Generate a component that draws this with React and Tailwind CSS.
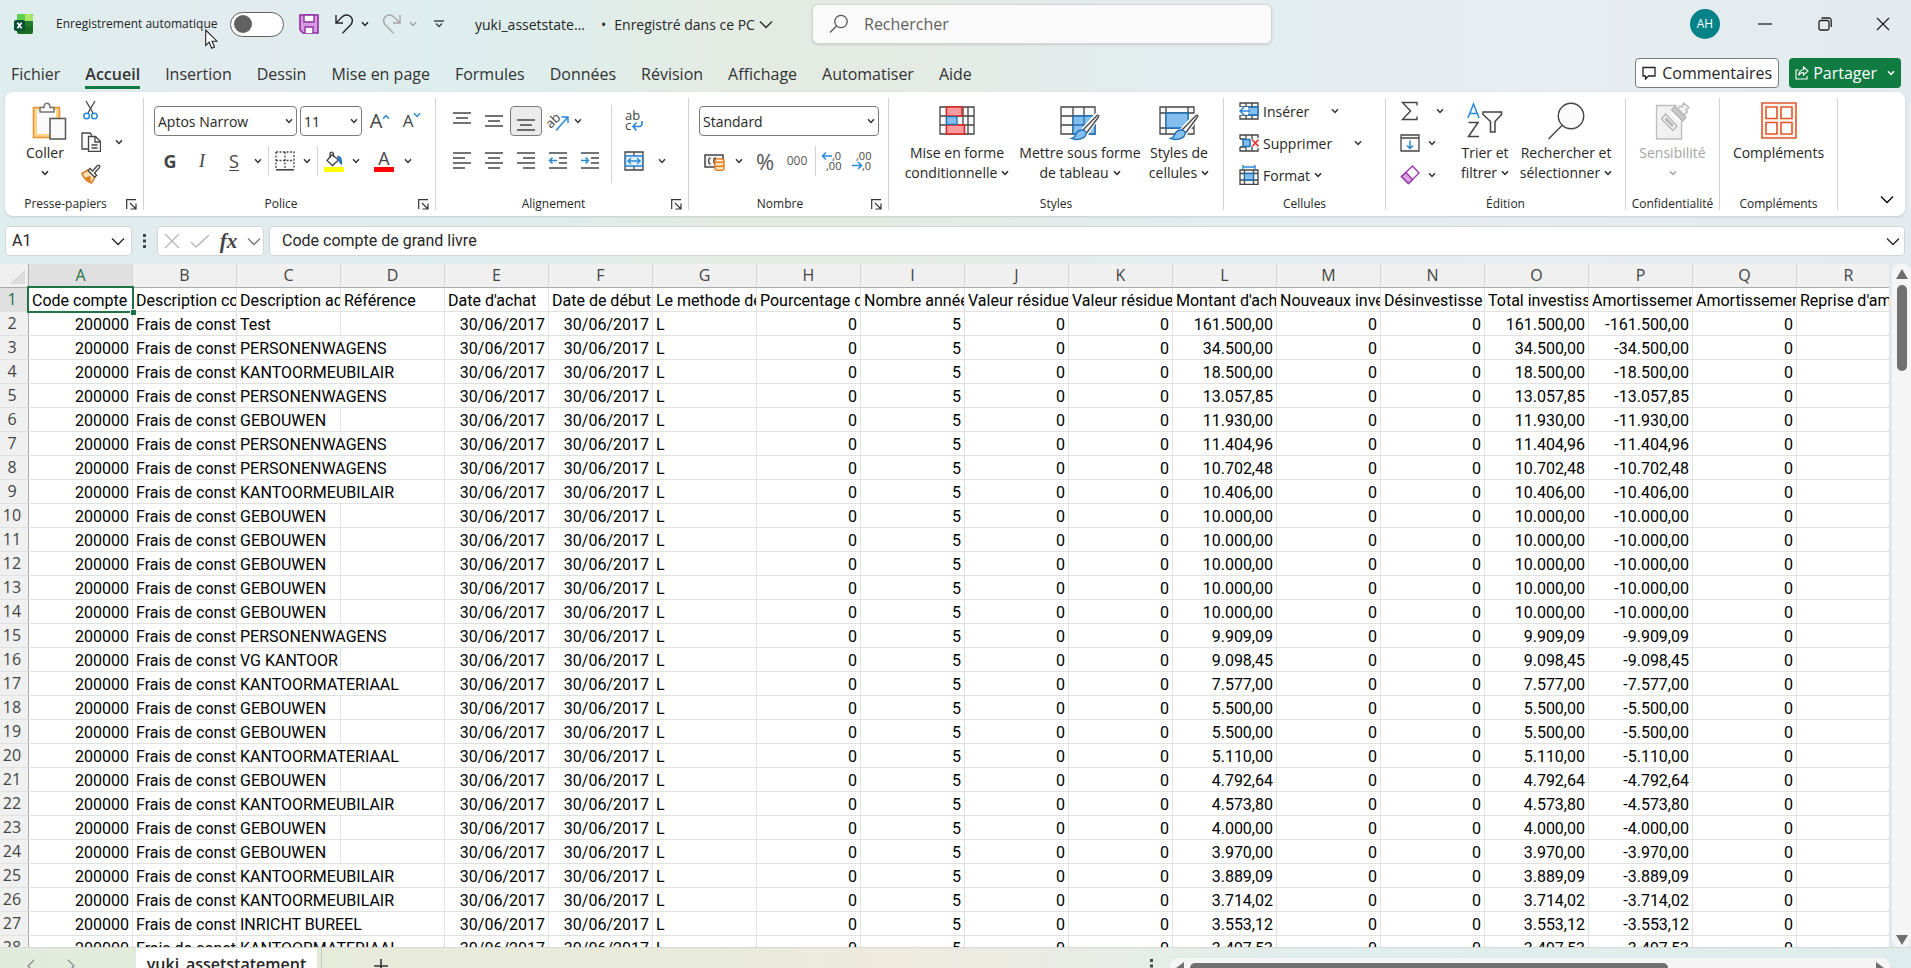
import { useState } from 'react'
import clsx from 'clsx'

// ==========================================
// 1. DONNÉES
// ==========================================
const COLUMNS = 'ABCDEFGHIJKLMNOPQR'.split('')

const HEADERS = [
  'Code compte',
  'Description co',
  'Description ac',
  'Référence',
  "Date d'achat",
  'Date de début',
  'Le methode de',
  'Pourcentage d',
  'Nombre année',
  'Valeur résidue',
  'Valeur résidue',
  "Montant d'ach",
  'Nouveaux inve',
  'Désinvestisse',
  'Total investiss',
  'Amortissemen',
  'Amortissemen',
  "Reprise d'am",
]

const ASSETS = [
  ['Test', '161.500,00'],
  ['PERSONENWAGENS', '34.500,00'],
  ['KANTOORMEUBILAIR', '18.500,00'],
  ['PERSONENWAGENS', '13.057,85'],
  ['GEBOUWEN', '11.930,00'],
  ['PERSONENWAGENS', '11.404,96'],
  ['PERSONENWAGENS', '10.702,48'],
  ['KANTOORMEUBILAIR', '10.406,00'],
  ['GEBOUWEN', '10.000,00'],
  ['GEBOUWEN', '10.000,00'],
  ['GEBOUWEN', '10.000,00'],
  ['GEBOUWEN', '10.000,00'],
  ['GEBOUWEN', '10.000,00'],
  ['PERSONENWAGENS', '9.909,09'],
  ['VG KANTOOR', '9.098,45'],
  ['KANTOORMATERIAAL', '7.577,00'],
  ['GEBOUWEN', '5.500,00'],
  ['GEBOUWEN', '5.500,00'],
  ['KANTOORMATERIAAL', '5.110,00'],
  ['GEBOUWEN', '4.792,64'],
  ['KANTOORMEUBILAIR', '4.573,80'],
  ['GEBOUWEN', '4.000,00'],
  ['GEBOUWEN', '3.970,00'],
  ['KANTOORMEUBILAIR', '3.889,09'],
  ['KANTOORMEUBILAIR', '3.714,02'],
  ['INRICHT BUREEL', '3.553,12'],
  ['KANTOORMATERIAAL', '3.497,53'],
]

const TABS = [
  'Fichier', 'Accueil', 'Insertion', 'Dessin', 'Mise en page', 'Formules',
  'Données', 'Révision', 'Affichage', 'Automatiser', 'Aide',
]

// ==========================================
// 2. ICÔNES
// ==========================================
function Icon({ w = 20, h = 20, children, className }) {
  return (
    <svg
      width={w}
      height={h}
      viewBox={`0 0 ${w} ${h}`}
      fill="none"
      stroke="#444"
      strokeWidth="1.3"
      className={clsx('shrink-0', className)}
      aria-hidden="true"
    >
      {children}
    </svg>
  )
}

function Chevron({ className }) {
  return (
    <Icon w={8} h={6} className={className}>
      <path d="M1 1.2 4 4.4 7 1.2" stroke="currentColor" strokeWidth="1.5" />
    </Icon>
  )
}

function BigChevron({ className }) {
  return (
    <Icon w={14} h={9} className={className}>
      <path d="M1 1.5 7 7.5 13 1.5" stroke="currentColor" strokeWidth="1.3" />
    </Icon>
  )
}

const ExcelLogo = () => (
  <Icon w={20} h={20}>
    <g stroke="none">
      <rect x="3" y="0" width="16" height="20" rx="2" fill="#1a6b22" />
      <path d="M3 2a2 2 0 0 1 2-2h6v7H3z" fill="#5fcf50" />
      <path d="M11 0h6a2 2 0 0 1 2 2v5h-8z" fill="#a9e66a" />
      <path d="M11 7h8v6h-8z" fill="#1f7a2c" />
      <rect x="0" y="6" width="11" height="11" rx="2" fill="#0c5136" />
    </g>
    <path d="M3.4 8.8 7.6 14.2M7.6 8.8 3.4 14.2" stroke="#fff" strokeWidth="1.7" />
  </Icon>
)

const SaveIcon = () => (
  <Icon w={20} h={20}>
    <path d="M1 1h18v18H4l-3-3z" fill="#d79be0" stroke="#8f2fa0" strokeWidth="1.6" />
    <path d="M5 1h10v7H5z" fill="#fff" stroke="#8f2fa0" strokeWidth="1.4" />
    <path d="M6 19v-6h8v6" fill="#fff" stroke="#8f2fa0" strokeWidth="1.4" />
  </Icon>
)

const UndoIcon = ({ className }) => (
  <Icon w={18} h={20} className={className}>
    <path d="M1 1v8h7M1.5 8.5 7 3c3-3 7-2.3 9 0 2 2.6 1.6 5.5-.5 8L7.5 19.3" stroke="currentColor" strokeWidth="1.4" />
  </Icon>
)

const PasteIcon = () => (
  <Icon w={36} h={38} className="ml-2">
    <path d="M2.5 5.5h26v30h-26z" fill="#fbd48a" stroke="#e8912d" strokeWidth="1.5" />
    <path d="M6 8h19v24H6z" fill="#fafafa" stroke="none" />
    <path d="M9 10V5.5h4C13 2.500 14.500 1.200 16 1.200s3 1.300 3 4.300h4V10z" fill="#fafafa" stroke="#777" strokeWidth="1.5" />
    <path d="M19 16.5h15.500V37H19z" fill="#fafafa" stroke="#555" strokeWidth="1.5" />
  </Icon>
)

const CutIcon = () => (
  <Icon>
    <path d="M5 1 12 13M14 1 7 13" />
    <circle cx="5.6" cy="16" r="2.8" stroke="#2b88d8" strokeWidth="1.5" />
    <circle cx="13.4" cy="16" r="2.8" stroke="#2b88d8" strokeWidth="1.5" />
  </Icon>
)

const CopyIcon = () => (
  <Icon>
    <path d="M7 17H1V1h8l2 2.5" fill="#fafafa" />
    <path d="M7.5 4.5h7l5 5V19.3h-12z" fill="#fafafa" />
    <path d="M14 4.5V10h5.5M10.500 13h6M10.500 16h6" />
  </Icon>
)

const BrushIcon = () => (
  <Icon>
    <path d="M1 9.500 7 6l7 7-3.500 6C6 17.500 2.500 14 1 9.500z" fill="#fde3bd" stroke="#e07b1a" strokeWidth="1.5" />
    <path d="M4 14 9.500 11.500v7z" fill="#e07b1a" stroke="none" />
    <path d="M7 6.500 9 4.500l2.500 2.500 5-5.500c1-1 3 .5 2 2l-5 5.500 2.200 2.200-2 2z" fill="#fafafa" />
  </Icon>
)

const LauncherIcon = () => (
  <Icon w={11} h={11}>
    <path d="M.7 10V.7H10M4 4l5.500 5.500M10 4.500V10H4.500" stroke="#333" strokeWidth="1.2" />
  </Icon>
)

function Lines({ rows, children }) {
  return (
    <Icon>
      {rows.map(([x1, x2, y]) => (
        <path key={y} d={`M${x1} ${y}H${x2}`} strokeWidth="1.5" />
      ))}
      {children}
    </Icon>
  )
}

const OrientIcon = () => (
  <Icon w={22} h={22}>
    <text x="0" y="14" transform="rotate(-45 8 12)" fontSize="13" fill="#444" stroke="none" className="font-['Open_Sans',sans-serif]">ab</text>
    <path d="M9 20.500 20.500 7.500M14.500 7h6.500v6" stroke="#2b88d8" strokeWidth="1.5" />
  </Icon>
)

const WrapIcon = () => (
  <Icon w={20} h={22}>
    <text x="1" y="9.5" fontSize="13" fill="#444" stroke="none" className="font-['Open_Sans',sans-serif]">ab</text>
    <text x="1" y="19.5" fontSize="13" fill="#444" stroke="none" className="font-['Open_Sans',sans-serif]">c</text>
    <path d="M18 11v2.500c0 2-1 3-3 3H9.500M12.500 12.500 9 16.500l3.500 4" stroke="#2b88d8" strokeWidth="1.6" />
  </Icon>
)

const MergeIcon = () => (
  <Icon>
    <path d="M1 1h18v18H1zM1 5.500h18M1 14.500h18M10 1v4.500M10 14.500V19" fill="#f3f3f3" />
    <path d="M1.500 5h17v10h-17z" fill="#e5f2fc" stroke="#2b88d8" />
    <path d="M4 10h12M7 7l-3 3 3 3M13 7l3 3-3 3" stroke="#2b88d8" strokeWidth="1.4" />
  </Icon>
)

const BorderIcon = () => (
  <Icon>
    <path d="M1 1h18v17M1 1v17M10 1v17M1 9.500h18" strokeDasharray="2 1.5" />
    <path d="M1 18.800h18" strokeWidth="1.6" />
  </Icon>
)

const FillIcon = () => (
  <Icon w={20} h={21}>
    <path d="M8 3.500 14.500 9 8.500 14.500 3 9.500z" fill="#fafafa" />
    <path d="M6 7V3c0-2.500 3.500-2.500 3.500 0v3" />
    <path d="M14 5.500c3 .5 3.800 4 3.300 7.500-1.600-1-2-3-2.800-4.500z" fill="#2b88d8" stroke="#2b6fb5" />
    <path d="M0 16h20v5H0z" fill="#ff0" stroke="none" />
  </Icon>
)

const CurrencyIcon = () => (
  <Icon w={22} h={20}>
    <path d="M1 4h18v12H1z" fill="#f3f3f3" strokeWidth="1.5" />
    <path d="M6.500 7C4 7 4 13 6.500 13M12 7c-3 0-3 6 0 6" />
    <path d="M11 9h9v10h-9z" fill="#fde3bd" stroke="none" />
    <path d="M11 10v8c0 2 9 2 9 0v-8M11 14c0 2 9 2 9 0" stroke="#e07b1a" strokeWidth="1.4" />
    <ellipse cx="15.5" cy="9.5" rx="4.5" ry="1.8" fill="#fff3e0" stroke="#e07b1a" strokeWidth="1.4" />
  </Icon>
)

function DecimalIcon({ more }) {
  return (
    <Icon w={22} h={22}>
      <g fontSize="11" fill="#444" stroke="none" className="font-['Open_Sans',sans-serif]">
        <text x={more ? 11 : 5} y="10">{more ? ',0' : ',00'}</text>
        <text x={more ? 5 : 11} y="20">{more ? ',00' : ',0'}</text>
      </g>
      {more ? (
        <path d="M11 6H1.500M5 2.500 1.500 6 5 9.500" stroke="#2b88d8" strokeWidth="1.5" />
      ) : (
        <path d="M1 15.500h9.500M7 12l3.500 3.500L7 19" stroke="#2b88d8" strokeWidth="1.5" />
      )}
    </Icon>
  )
}

const PaintStroke = () => (
  <>
    <path d="M36 9.500c1.500-1.500 3 0 2 1.500L27 27l-4-3z" fill="#fafafa" stroke="#fff" strokeWidth="4" />
    <path d="M37 9.500c1.500-1 2.200.5 1.500 1.500L26.500 27 23 24z" fill="#fafafa" />
    <path d="M22.500 24c2.500 0 4.500 2 3.500 4.500-1.500 5-10 6-14.500 4 3-.5 3.500-2 4.500-4.500 1-2.500 3.500-4 6.500-4z" fill="#83beec" stroke="#1f6fb5" />
  </>
)

const CondFormatIcon = () => (
  <Icon w={36} h={36} className="mt-1">
    <path d="M1 1h34v27H1zM1 10h34M1 19h34M7.500 1v27M29 1v27M24 1v27" fill="#fafafa" />
    <path d="M7.500 1H23v9H7.500zM7.500 19h18v9h-18z" fill="#ff9a9f" stroke="#d9261c" strokeWidth="1.5" />
    <path d="M7.500 10.700H18v7.600H7.500z" fill="#83beec" stroke="#1f6fb5" />
  </Icon>
)

const TableIcon = () => (
  <Icon w={40} h={36} className="mt-1">
    <path d="M1 1h34v27H1zM1 10h34M1 19h34M13 1v27M24 1v27" fill="#fafafa" />
    <path d="M13 10h22v18H13zM13 19h22M24 10v18" fill="#83beec" stroke="#1f6fb5" />
    <PaintStroke />
  </Icon>
)

const CellStyleIcon = () => (
  <Icon w={40} h={36} className="mt-1">
    <path d="M1 1h34v27H1zM7 1v27M29 1v27M1 7h34M1 22h34" fill="#fafafa" />
    <path d="M7 7h22v15H7z" fill="#83beec" stroke="#1f6fb5" />
    <PaintStroke />
  </Icon>
)

const InsertIcon = () => (
  <Icon>
    <path d="M1 2h18v16H1zM1 6h18M1 14h18M7 2v16M13 2v16" fill="#fafafa" />
    <path d="M8 6h11v8H8z" fill="#83beec" stroke="#1f6fb5" />
    <path d="M0 6h9v8H0z" fill="#fff" stroke="none" />
    <path d="M11 10H1.500M5.500 5.500 1 10l4.500 4.500" stroke="#2b88d8" strokeWidth="1.5" />
  </Icon>
)

const DeleteIcon = () => (
  <Icon>
    <path d="M1 6V2h18v3M1 14v4h18v-3M7 2v4M13 2v4M7 14v4M13 14v4M1 6h5M1 14h5" />
    <path d="M4 6.500h7v7H4z" fill="#83beec" stroke="#1f6fb5" strokeWidth="1.5" />
    <path d="M13 6.500l6.500 7M19.500 6.500l-6.500 7" stroke="#e8322b" strokeWidth="1.6" />
  </Icon>
)

const FormatIcon = () => (
  <Icon>
    <path d="M1 5h18v14.300H1zM1 8.500h18M1 15h18M5.500 5v14M14.500 5v14" fill="#fafafa" />
    <path d="M5.500 8.500h9V15h-9z" fill="#83beec" stroke="#1f6fb5" />
    <path d="M4 2h12M4 0v4M16 0v4" stroke="#2b88d8" strokeWidth="1.4" />
  </Icon>
)

const SigmaIcon = () => (
  <Icon>
    <path d="M17 4.500V1.500H2.500L10.500 10 2.500 18.500H17v-3" strokeWidth="1.4" />
  </Icon>
)

const FillDownIcon = () => (
  <Icon>
    <path d="M1 2h18v16H1zM1 5h18" fill="#fafafa" />
    <path d="M10 7.500v8M7 12.500l3 3 3-3" stroke="#2b88d8" strokeWidth="1.5" />
  </Icon>
)

const EraserIcon = () => (
  <Icon>
    <path d="M12.500 1 19 8 8.500 18.500 1.500 11.500z" fill="#fafafa" stroke="#9b3bab" strokeWidth="1.4" />
    <path d="M6 7.500l6.500 7-4 4-7-7z" fill="#dba1e2" stroke="#9b3bab" strokeWidth="1.4" />
  </Icon>
)

const SortIcon = () => (
  <Icon w={36} h={36}>
    <path d="M1 16 6.500 2 12 16M3 11.500h7" stroke="#2b88d8" strokeWidth="1.5" />
    <path d="M1.500 20.500h9.500L1.500 34.500H12" strokeWidth="1.5" />
    <path d="M16 10h18.500v2.500L28 19.500V30h-4.500V19.500L16 12.500z" fill="#fafafa" strokeWidth="1.5" />
  </Icon>
)

const FindIcon = () => (
  <Icon w={38} h={38}>
    <circle cx="24" cy="14" r="12.7" fill="#fafafa" strokeWidth="1.4" />
    <path d="M15 23.500 1.500 37" strokeWidth="1.5" />
  </Icon>
)

const SensitivityIcon = () => (
  <Icon w={36} h={38}>
    <path d="M1.500 3.500h25V37h-25z" fill="#f1f1f1" stroke="#bdbdbd" />
    <path d="M14 10 26 0l9 10-10 10z" fill="#fff" stroke="none" />
    <path d="M16.500 8 20 4.500 31 15.500 27.500 19z" fill="#c9c9c9" stroke="#b4b4b4" />
    <path d="M22.500 6.500 25 4l2 1 1.500-4 5.500 4.500-3 2.500 1.500 2-3.500 3z" fill="#f1f1f1" stroke="#b4b4b4" />
    <path d="M10.500 12 22 24l-4 4.500L6.500 17z" fill="#f1f1f1" stroke="#b4b4b4" />
    <path d="M10.500 16.500 18 24" stroke="#b4b4b4" strokeWidth="2.5" />
  </Icon>
)

const AddinsIcon = () => (
  <Icon w={36} h={37}>
    <path d="M1 1h34v35H1z" fill="#fff5ef" stroke="#e0562b" strokeWidth="1.6" />
    <path d="M5 5h11v11.500H5zM20 5h11v11.500H20zM5 20.500h11V32H5zM20 20.500h11V32H20z" fill="#fff" stroke="#e0562b" strokeWidth="1.6" />
  </Icon>
)

// ==========================================
// 3. BRIQUES DU RUBAN
// ==========================================
function Group({ label, launcher, className, children }) {
  return (
    <section className="flex shrink-0 pt-1.5 pb-1">
      <div className={clsx('flex flex-col', className)}>
        <div className="flex flex-1">{children}</div>
        <div className="flex h-4 items-center text-[12px] text-[#262626]">
          <span className="flex-1 text-center">{label}</span>
          {launcher && (
            <button aria-label={`Options ${label}`} className="w-[17px]">
              <LauncherIcon />
            </button>
          )}
        </div>
      </div>
      <div className="mb-0.5 w-px bg-[#d2d2d2]" />
    </section>
  )
}

function Tool({ label, active, className, children }) {
  return (
    <button
      aria-label={label}
      className={clsx(
        'flex h-[30px] shrink-0 items-center justify-center',
        active && 'rounded border border-[#7a7a7a] bg-[#ebebeb]',
        className || 'w-8',
      )}
    >
      {children}
    </button>
  )
}

function Arrow({ label, className }) {
  return (
    <button aria-label={label} className={clsx('flex h-[30px] w-4 shrink-0 items-center justify-center text-[#333]', className)}>
      <Chevron />
    </button>
  )
}

function Big({ icon, lines, disabled, noArrow, className }) {
  return (
    <button
      disabled={disabled}
      className={clsx(
        'flex shrink-0 flex-col items-center pt-1 text-[14px] leading-5 whitespace-nowrap',
        disabled ? 'text-[#a3a3a3]' : 'text-[#262626]',
        className,
      )}
    >
      <span className="flex h-[41px] items-start justify-center">{icon}</span>
      {lines.map((line, i) => (
        <span key={i} className="flex h-5 items-center gap-1">
          {line}
          {i === lines.length - 1 && !noArrow && <Chevron />}
        </span>
      ))}
    </button>
  )
}

function Combo({ label, options, className }) {
  return (
    <label className={clsx('relative flex h-[30px] shrink-0 items-center', className)}>
      <span className="sr-only">{label}</span>
      <select className="h-full w-full appearance-none rounded border border-[#7a7a7a] bg-white pl-[3px] text-[14px] text-[#262626]">
        {options.map((o) => (
          <option key={o}>{o}</option>
        ))}
      </select>
      <Chevron className="pointer-events-none absolute right-1 text-[#333]" />
    </label>
  )
}

const Sep = () => <span className="mx-0.5 h-[30px] w-px shrink-0 bg-[#d2d2d2]" />

// ==========================================
// 4. BARRE DE TITRE ET ONGLETS
// ==========================================
function TitleBar() {
  const [autoSave, setAutoSave] = useState(false)

  return (
    <header className="flex h-12 shrink-0 items-center text-[#262626]">
      <div className="flex w-[812px] shrink-0 items-center">
        <span className="ml-3.5 flex w-[42px]">
          <ExcelLogo />
        </span>
        <label className="flex items-center text-[12px]">
          <span className="w-[174px] whitespace-nowrap">Enregistrement automatique</span>
          <input
            type="checkbox"
            role="switch"
            checked={autoSave}
            onChange={(e) => setAutoSave(e.target.checked)}
            className="peer sr-only"
          />
          <span className="flex h-[25px] w-[54px] items-center rounded-full border border-[#616161] bg-white px-[3px] peer-checked:justify-end">
            <span className="h-[18px] w-[18px] rounded-full bg-[#616161]" />
          </span>
        </label>
        <button aria-label="Enregistrer" className="ml-[15px]"><SaveIcon /></button>
        <button aria-label="Annuler" className="ml-4"><UndoIcon /></button>
        <button aria-label="Historique d'annulation" className="ml-2"><Chevron /></button>
        <button aria-label="Rétablir" className="ml-3.5 text-[#a6a6a6]"><UndoIcon className="-scale-x-100" /></button>
        <button aria-label="Historique de rétablissement" className="ml-2 text-[#a6a6a6]"><Chevron /></button>
        <button aria-label="Personnaliser" className="ml-4">
          <Icon w={12} h={8}>
            <path d="M1 1h10M3 3.500 6 6.500 9 3.500" />
          </Icon>
        </button>
        <div className="ml-[30px] flex items-center gap-2 text-[14px] whitespace-nowrap">
          <span className="w-[118px]">yuki_assetstate…</span>
          <span>•</span>
          <span>Enregistré dans ce PC</span>
          <BigChevron className="-ml-1" />
        </div>
      </div>
      <label className="flex h-10 w-[460px] items-center rounded-md border border-[#cfd4d4] bg-[#fafafa] pl-4 shadow-sm">
        <Icon w={20} h={20}>
          <circle cx="12" cy="7.5" r="6.2" stroke="#555" />
          <path d="M7.500 12 1 18.500" stroke="#555" />
        </Icon>
        <span className="sr-only">Rechercher</span>
        <input
          type="search"
          placeholder="Rechercher"
          className="ml-[15px] flex-1 bg-transparent text-[16px] outline-none placeholder:text-[#616161]"
        />
      </label>
      <div className="ml-auto flex items-center">
        <button className="flex h-[30px] w-[30px] items-center justify-center rounded-full bg-[#038387] text-[12px] text-white">AH</button>
        <div className="ml-[15px] flex">
          <button aria-label="Réduire" className="flex w-[60px] justify-center">
            <Icon w={14} h={14}><path d="M0 7h14" stroke="#222" /></Icon>
          </button>
          <button aria-label="Niveau inférieur" className="flex w-[60px] justify-center">
            <Icon w={14} h={14}>
              <rect x="1" y="3.5" width="10" height="9.5" rx="1.5" stroke="#222" />
              <path d="M3.500 1H11a2.200 2.200 0 0 1 2.200 2.200V10" stroke="#222" />
            </Icon>
          </button>
          <button aria-label="Fermer" className="flex w-[56px] justify-center">
            <Icon w={14} h={14}><path d="M1 1l12 12M13 1 1 13" stroke="#222" /></Icon>
          </button>
        </div>
      </div>
    </header>
  )
}

function RibbonTabs() {
  return (
    <nav className="flex h-11 shrink-0 items-end pr-2.5 pb-[3px] pl-[11px] text-[16px] text-[#333]">
      <div className="flex gap-[25px]">
        {TABS.map((tab) => (
          <button
            key={tab}
            className={clsx(
              'flex h-7 items-center border-b-[3px] whitespace-nowrap',
              tab === 'Accueil' ? 'border-[#107c41] font-semibold' : 'border-transparent',
            )}
          >
            {tab}
          </button>
        ))}
      </div>
      <div className="ml-auto flex gap-2.5 pb-px">
        <button className="flex h-[30px] items-center gap-1.5 rounded border border-[#7a7a7a] bg-white px-1.5 text-[16px] text-[#262626]">
          <Icon w={14} h={14}>
            <path d="M1 1.500h12v8.500H6.500L3.500 13v-3H1z" stroke="#222" />
          </Icon>
          Commentaires
        </button>
        <button className="flex h-[30px] items-center gap-1 rounded bg-[#107c41] px-1.5 text-[16px] text-white">
          <Icon w={14} h={14}>
            <path d="M3.500 4H1v9h11v-3M8.500 1l4.500 4-4.500 4V6.500C6 6.500 4.500 7.500 3.500 9.500 4 6 5.500 4 8.500 3.500z" stroke="#fff" strokeWidth="1.1" />
          </Icon>
          Partager
          <Chevron className="ml-1.5" />
        </button>
      </div>
    </nav>
  )
}

// ==========================================
// 5. RUBAN
// ==========================================
function Ribbon() {
  return (
    <div className="mr-1.5 ml-[5px] flex h-[124px] shrink-0 rounded-lg bg-white shadow">
      <Group label="Presse-papiers" launcher className="w-[138px]">
        <Big className="ml-2.5 w-[60px]" icon={<PasteIcon />} lines={['Coller', '']} />
        <div className="flex flex-col gap-2 *:h-6 *:items-center">
          <Tool label="Couper"><CutIcon /></Tool>
          <span className="flex">
            <Tool label="Copier"><CopyIcon /></Tool>
            <Arrow label="Options de copie" className="ml-1" />
          </span>
          <Tool label="Reproduire la mise en forme"><BrushIcon /></Tool>
        </div>
      </Group>

      <Group label="Police" launcher className="w-[291px]">
        <div className="flex flex-col gap-2.5 pt-2 pl-2.5">
          <div className="flex">
            <Combo label="Police" options={['Aptos Narrow', 'Arial']} className="w-[143px]" />
            <Combo label="Taille" options={['11', '12']} className="ml-[3px] w-[62px]" />
            <Tool label="Augmenter la taille" className="ml-0.5 w-8">
              <span className="flex text-[20px] text-[#444]">A<Icon w={8} h={6} className="mt-2"><path d="M1 4.800 4 1.500 7 4.800" stroke="#2b88d8" strokeWidth="1.5" /></Icon></span>
            </Tool>
            <Tool label="Réduire la taille">
              <span className="flex text-[17px] text-[#444]">A<Chevron className="mt-1 text-[#2b88d8]" /></span>
            </Tool>
          </div>
          <div className="flex text-[18px] text-[#444]">
            <Tool label="Gras" className="w-8 font-bold">G</Tool>
            <Tool label="Italique" className="w-8 font-['Liberation_Serif',serif] italic">I</Tool>
            <Tool label="Souligné" className="w-8"><span className="underline underline-offset-2">S</span></Tool>
            <Arrow label="Options de soulignement" />
            <Sep />
            <Tool label="Bordures" className="w-7"><BorderIcon /></Tool>
            <Arrow label="Options de bordure" />
            <Sep />
            <Tool label="Couleur de remplissage" className="w-7"><FillIcon /></Tool>
            <Arrow label="Couleurs de remplissage" />
            <Tool label="Couleur de police" className="ml-1 w-8">
              <span className="flex w-5 flex-col items-center border-b-[5px] border-[#f00] leading-[17px]">A</span>
            </Tool>
            <Arrow label="Couleurs de police" />
          </div>
        </div>
      </Group>

      <Group label="Alignement" launcher className="w-[252px]">
        <div className="flex flex-col gap-2.5 pt-2 pl-2.5">
          <div className="flex">
            <Tool label="Aligner en haut"><Lines rows={[[1, 19, 2], [4, 16, 7], [1, 19, 12]]} /></Tool>
            <Tool label="Aligner au centre"><Lines rows={[[1, 19, 5], [4, 16, 10], [1, 19, 15]]} /></Tool>
            <Tool label="Aligner en bas" active><Lines rows={[[1, 19, 9], [4, 16, 14], [1, 19, 19]]} /></Tool>
            <Tool label="Orientation"><OrientIcon /></Tool>
            <Arrow label="Options d'orientation" className="-ml-1" />
          </div>
          <div className="flex">
            <Tool label="Aligner à gauche"><Lines rows={[[1, 19, 2], [1, 13, 7], [1, 19, 12], [1, 13, 17]]} /></Tool>
            <Tool label="Centrer"><Lines rows={[[1, 19, 2], [4, 16, 7], [1, 19, 12], [4, 16, 17]]} /></Tool>
            <Tool label="Aligner à droite"><Lines rows={[[1, 19, 2], [7, 19, 7], [1, 19, 12], [7, 19, 17]]} /></Tool>
            <Tool label="Diminuer le retrait">
              <Lines rows={[[1, 19, 2], [11, 19, 7], [11, 19, 12], [1, 19, 17]]}>
                <path d="M9 9.500H1.500M4.500 6.500l-3 3 3 3" stroke="#2b88d8" strokeWidth="1.5" />
              </Lines>
            </Tool>
            <Tool label="Augmenter le retrait">
              <Lines rows={[[1, 19, 2], [11, 19, 7], [11, 19, 12], [1, 19, 17]]}>
                <path d="M1 9.500h7.500M5.500 6.500l3 3-3 3" stroke="#2b88d8" strokeWidth="1.5" />
              </Lines>
            </Tool>
          </div>
        </div>
        <span className="mt-[7px] ml-[5px] h-[78px] w-px bg-[#d2d2d2]" />
        <div className="flex flex-col gap-2.5 pt-2 pl-1.5">
          <Tool label="Renvoyer à la ligne"><WrapIcon /></Tool>
          <span className="flex">
            <Tool label="Fusionner et centrer"><MergeIcon /></Tool>
            <Arrow label="Options de fusion" className="ml-1" />
          </span>
        </div>
      </Group>

      <Group label="Nombre" launcher className="w-[199px]">
        <div className="flex flex-col gap-2.5 pt-2 pl-2.5">
          <Combo label="Format de nombre" options={['Standard', 'Nombre', 'Monétaire']} className="w-[180px]" />
          <div className="flex text-[#555]">
            <Tool label="Format comptable"><CurrencyIcon /></Tool>
            <Arrow label="Options comptables" />
            <Tool label="Pourcentage" className="ml-0.5 w-8 text-[22px]">%</Tool>
            <Tool label="Milliers" className="w-8 text-[12px]">000</Tool>
            <Sep />
            <Tool label="Ajouter une décimale" className="w-7"><DecimalIcon more /></Tool>
            <Tool label="Réduire les décimales"><DecimalIcon /></Tool>
          </div>
        </div>
      </Group>

      <Group label="Styles" className="w-[334px]">
        <div className="flex items-start pl-2">
          <Big className="w-[120px]" icon={<CondFormatIcon />} lines={['Mise en forme', 'conditionnelle']} />
          <Big className="w-[126px]" icon={<TableIcon />} lines={['Mettre sous forme', 'de tableau']} />
          <Big className="w-[72px]" icon={<CellStyleIcon />} lines={['Styles de', 'cellules']} />
        </div>
      </Group>

      <Group label="Cellules" className="w-[161px]">
        <div className="flex flex-col gap-2 pt-px pl-[15px] text-[14px] text-[#262626]">
          <span className="flex h-6 items-center">
            <button className="flex items-center gap-1 pr-[18px]"><InsertIcon />Insérer</button>
            <Arrow label="Options d'insertion" />
          </span>
          <span className="flex h-6 items-center">
            <button className="flex items-center gap-1 pr-[18px]"><DeleteIcon />Supprimer</button>
            <Arrow label="Options de suppression" />
          </span>
          <button className="flex h-6 items-center gap-1"><FormatIcon />Format<Chevron /></button>
        </div>
      </Group>

      <Group label="Édition" className="w-[239px]">
        <div className="flex w-[67px] flex-col gap-2 pt-px pl-2">
          <span className="flex h-6 items-center">
            <Tool label="Somme automatique"><SigmaIcon /></Tool>
            <Arrow label="Autres fonctions" className="ml-1.5" />
          </span>
          <span className="flex h-6 items-center">
            <Tool label="Remplissage"><FillDownIcon /></Tool>
            <Arrow label="Options de remplissage" className="-ml-0.5" />
          </span>
          <span className="flex h-6 items-center">
            <Tool label="Effacer"><EraserIcon /></Tool>
            <Arrow label="Options d'effacement" className="-ml-0.5" />
          </span>
        </div>
        <Big className="w-[64px]" icon={<SortIcon />} lines={['Trier et', 'filtrer']} />
        <Big className="w-[98px]" icon={<FindIcon />} lines={['Rechercher et', 'sélectionner']} />
      </Group>

      <Group label="Confidentialité" className="w-[93px]">
        <Big className="w-full" disabled icon={<SensitivityIcon />} lines={['Sensibilité', '']} />
      </Group>

      <Group label="Compléments" className="w-[117px]">
        <Big className="w-full" noArrow icon={<AddinsIcon />} lines={['Compléments']} />
      </Group>

      <button aria-label="Réduire le ruban" className="mt-auto mr-[11px] mb-3 ml-auto">
        <BigChevron />
      </button>
    </div>
  )
}

// ==========================================
// 6. BARRE DE FORMULE
// ==========================================
function FormulaBar() {
  return (
    <div className="mr-1.5 ml-[5px] flex h-12 shrink-0 items-center pt-0.5 text-[14px] text-[#262626]">
      <label className="flex h-[30px] w-[127px] items-center rounded border border-[#d0d5d5] bg-white px-1.5">
        <span className="sr-only">Zone Nom</span>
        <input defaultValue="A1" className="min-w-0 flex-1 font-[Roboto,sans-serif] text-[16px] outline-none" />
        <BigChevron />
      </label>
      <Icon w={25} h={16}>
        <path d="M11 2.500h3M11 8h3M11 13.500h3" strokeWidth="3" />
      </Icon>
      <div className="flex h-[30px] w-[107px] items-center justify-between rounded border border-[#d0d5d5] bg-white pr-0.5 pl-1.5">
        <button aria-label="Annuler">
          <Icon w={16} h={16}><path d="M1 1l14 14M15 1 1 15" stroke="#b5b5b5" /></Icon>
        </button>
        <button aria-label="Entrer">
          <Icon w={20} h={16}><path d="M1 9l5 5L19 2" stroke="#b5b5b5" /></Icon>
        </button>
        <button aria-label="Insérer une fonction" className="font-['Liberation_Serif',serif] text-[21px] leading-7 font-bold text-[#444] italic">fx</button>
        <BigChevron className="text-[#777]" />
      </div>
      <label className="ml-[5px] flex h-[30px] flex-1 items-center rounded border border-[#d0d5d5] bg-white pr-1 pl-3">
        <span className="sr-only">Formule</span>
        <input
          defaultValue="Code compte de grand livre"
          className="min-w-0 flex-1 font-[Roboto,sans-serif] text-[16px] outline-none"
        />
        <BigChevron />
      </label>
    </div>
  )
}

// ==========================================
// 7. FEUILLE
// ==========================================
const CELL = 'h-6 overflow-hidden border-r border-b border-[#e1e1e1] px-[3px] pt-0.5 pb-0 leading-[21px] whitespace-nowrap'

function RowHead({ n }) {
  return (
    <th
      scope="row"
      className={clsx(
        'h-6 border-r border-b border-r-[#ababab] border-b-[#e1e1e1] p-0 pr-1 text-center font-["Open_Sans",sans-serif] text-[16px] leading-[23px] font-normal',
        n === 1 ? 'bg-[#e0e0e0] text-[#217346]' : 'bg-[#f0f0f0] text-[#444]',
      )}
    >
      {n}
    </th>
  )
}

function Sheet() {
  return (
    <div className="min-w-0 flex-1 overflow-hidden border-r border-[#e1e1e1] bg-white">
      <table className="w-[1901px] table-fixed border-separate border-spacing-0 font-[Roboto,sans-serif] text-[16px] text-black">
        <colgroup>
          <col className="w-[29px]" />
          {COLUMNS.map((c) => (
            <col key={c} className="w-[104px]" />
          ))}
        </colgroup>
        <thead>
          <tr>
            <td className="h-6 border-r border-b border-[#ababab] bg-[#f0f0f0] p-0">
              <Icon w={28} h={22}>
                <path d="M25 5v14H9z" fill="#dcdcdc" stroke="none" />
              </Icon>
            </td>
            {COLUMNS.map((c) => (
              <th
                key={c}
                scope="col"
                className={clsx(
                  'h-6 border-r border-b border-r-[#d6d6d6] border-b-[#ababab] p-0 font-["Open_Sans",sans-serif] text-[16px] leading-[23px] font-normal',
                  c === 'A' ? 'bg-[#e0e0e0] text-[#217346]' : 'bg-[#f0f0f0] text-[#444]',
                )}
              >
                {c}
              </th>
            ))}
          </tr>
        </thead>
        <tbody>
          <tr>
            <RowHead n={1} />
            {HEADERS.map((h, i) =>
              i === 0 ? (
                <td key={i} className="relative h-6 border-r border-b border-[#e1e1e1] px-[3px] pt-0.5 pb-0 leading-[21px] whitespace-nowrap">
                  {h}
                  <span className="absolute -inset-0.5 border-2 border-[#217346]" />
                  <span className="absolute -right-1 -bottom-1 h-[6px] w-[6px] border-t border-l border-white bg-[#217346]" />
                </td>
              ) : (
                <td key={i} className={CELL}>{h}</td>
              ),
            )}
          </tr>
          {ASSETS.map(([name, amount], i) => {
            // un libellé trop long déborde sur la colonne Référence, vide
            const spill = name.length > 10
            return (
              <tr key={i}>
                <RowHead n={i + 2} />
                <td className={clsx(CELL, 'text-right')}>200000</td>
                <td className={CELL}>Frais de const</td>
                <td className={CELL} colSpan={spill ? 2 : 1}>{name}</td>
                {!spill && <td className={CELL} />}
                <td className={clsx(CELL, 'text-right')}>30/06/2017</td>
                <td className={clsx(CELL, 'text-right')}>30/06/2017</td>
                <td className={CELL}>L</td>
                <td className={clsx(CELL, 'text-right')}>0</td>
                <td className={clsx(CELL, 'text-right')}>5</td>
                <td className={clsx(CELL, 'text-right')}>0</td>
                <td className={clsx(CELL, 'text-right')}>0</td>
                <td className={clsx(CELL, 'text-right')}>{amount}</td>
                <td className={clsx(CELL, 'text-right')}>0</td>
                <td className={clsx(CELL, 'text-right')}>0</td>
                <td className={clsx(CELL, 'text-right')}>{amount}</td>
                <td className={clsx(CELL, 'text-right')}>-{amount}</td>
                <td className={clsx(CELL, 'text-right')}>0</td>
                <td className={CELL} />
              </tr>
            )
          })}
        </tbody>
      </table>
    </div>
  )
}

function VerticalScroll() {
  return (
    <div className="ml-0.5 flex w-[19px] shrink-0 flex-col items-center justify-between rounded-lg bg-[#f5f5f5] pt-[5px] pb-0.5">
      <div className="flex flex-col items-center gap-1.5">
        <Icon w={12} h={10}><path d="M6 0l6 10H0z" fill="#6e6e6e" stroke="none" /></Icon>
        <div className="h-[86px] w-[10px] rounded-full bg-[#707070]" />
      </div>
      <Icon w={12} h={10}><path d="M6 10l6-10H0z" fill="#6e6e6e" stroke="none" /></Icon>
    </div>
  )
}

function SheetTabs() {
  return (
    <footer className="flex h-[21px] shrink-0 overflow-hidden border-t border-[#d5d9d2] bg-[linear-gradient(90deg,#e1ebdd_0%,#e8ebd9_20%,#e9ebda_38%,#eeeade_47%,#e0eeee_70%,#dfecee_100%)]">
      <div className="flex h-9 w-[136px] shrink-0 items-center gap-8 pl-[27px] text-[#8a8a8a]">
        <Icon w={8} h={14}><path d="M7 1 1 7l6 6" stroke="currentColor" /></Icon>
        <Icon w={8} h={14}><path d="M1 1l6 6-6 6" stroke="currentColor" /></Icon>
      </div>
      <button className="h-8 w-[181px] shrink-0 bg-white text-[16px] leading-8 font-semibold text-[#262626]">yuki_assetstatement</button>
      <span className="ml-1 h-9 w-px bg-[#c4c8c0]" />
      <button aria-label="Nouvelle feuille" className="ml-[52px] h-9">
        <Icon w={14} h={14}><path d="M7 0v14M0 7h14" stroke="#333" strokeWidth="1.6" /></Icon>
      </button>
      <div className="ml-auto flex h-9 w-[761px] items-center">
        <Icon w={20} h={16}><path d="M0 2.500h3M0 8h3M0 13.500h3" strokeWidth="3" /></Icon>
        <div className="mt-1 flex h-5 w-[720px] items-center rounded-lg bg-[#f5f5f5] px-1.5">
          <Icon w={8} h={12}><path d="M8 0v12L0 6z" fill="#6e6e6e" stroke="none" /></Icon>
          <div className="ml-1.5 h-[10px] w-[478px] rounded-full bg-[#707070]" />
          <Icon w={8} h={12} className="ml-auto"><path d="M0 0v12l8-6z" fill="#6e6e6e" stroke="none" /></Icon>
        </div>
      </div>
    </footer>
  )
}

export default function App() {
  return (
    <div className="relative flex h-screen flex-col overflow-hidden bg-[linear-gradient(90deg,#deeded_0%,#e2ebef_12%,#ddeeed_27%,#e4ebe3_38%,#e4ebe3_46%,#e3edf0_62%,#e7edf0_80%,#e3ebee_100%)] font-['Open_Sans',sans-serif]">
      <TitleBar />
      <RibbonTabs />
      <Ribbon />
      <FormulaBar />
      <main className="flex min-h-0 flex-1">
        <Sheet />
        <VerticalScroll />
      </main>
      <SheetTabs />

      {/* pointeur de la souris */}
      <svg width="13" height="21" viewBox="0 0 13 21" className="absolute top-[29px] left-[205px]" aria-hidden="true">
        <path d="M.7 1v15.500l3.500-3.300 2.500 6 2.800-1.200L7 12.200h5z" fill="#fff" stroke="#222" strokeWidth="1.1" />
      </svg>
    </div>
  )
}
